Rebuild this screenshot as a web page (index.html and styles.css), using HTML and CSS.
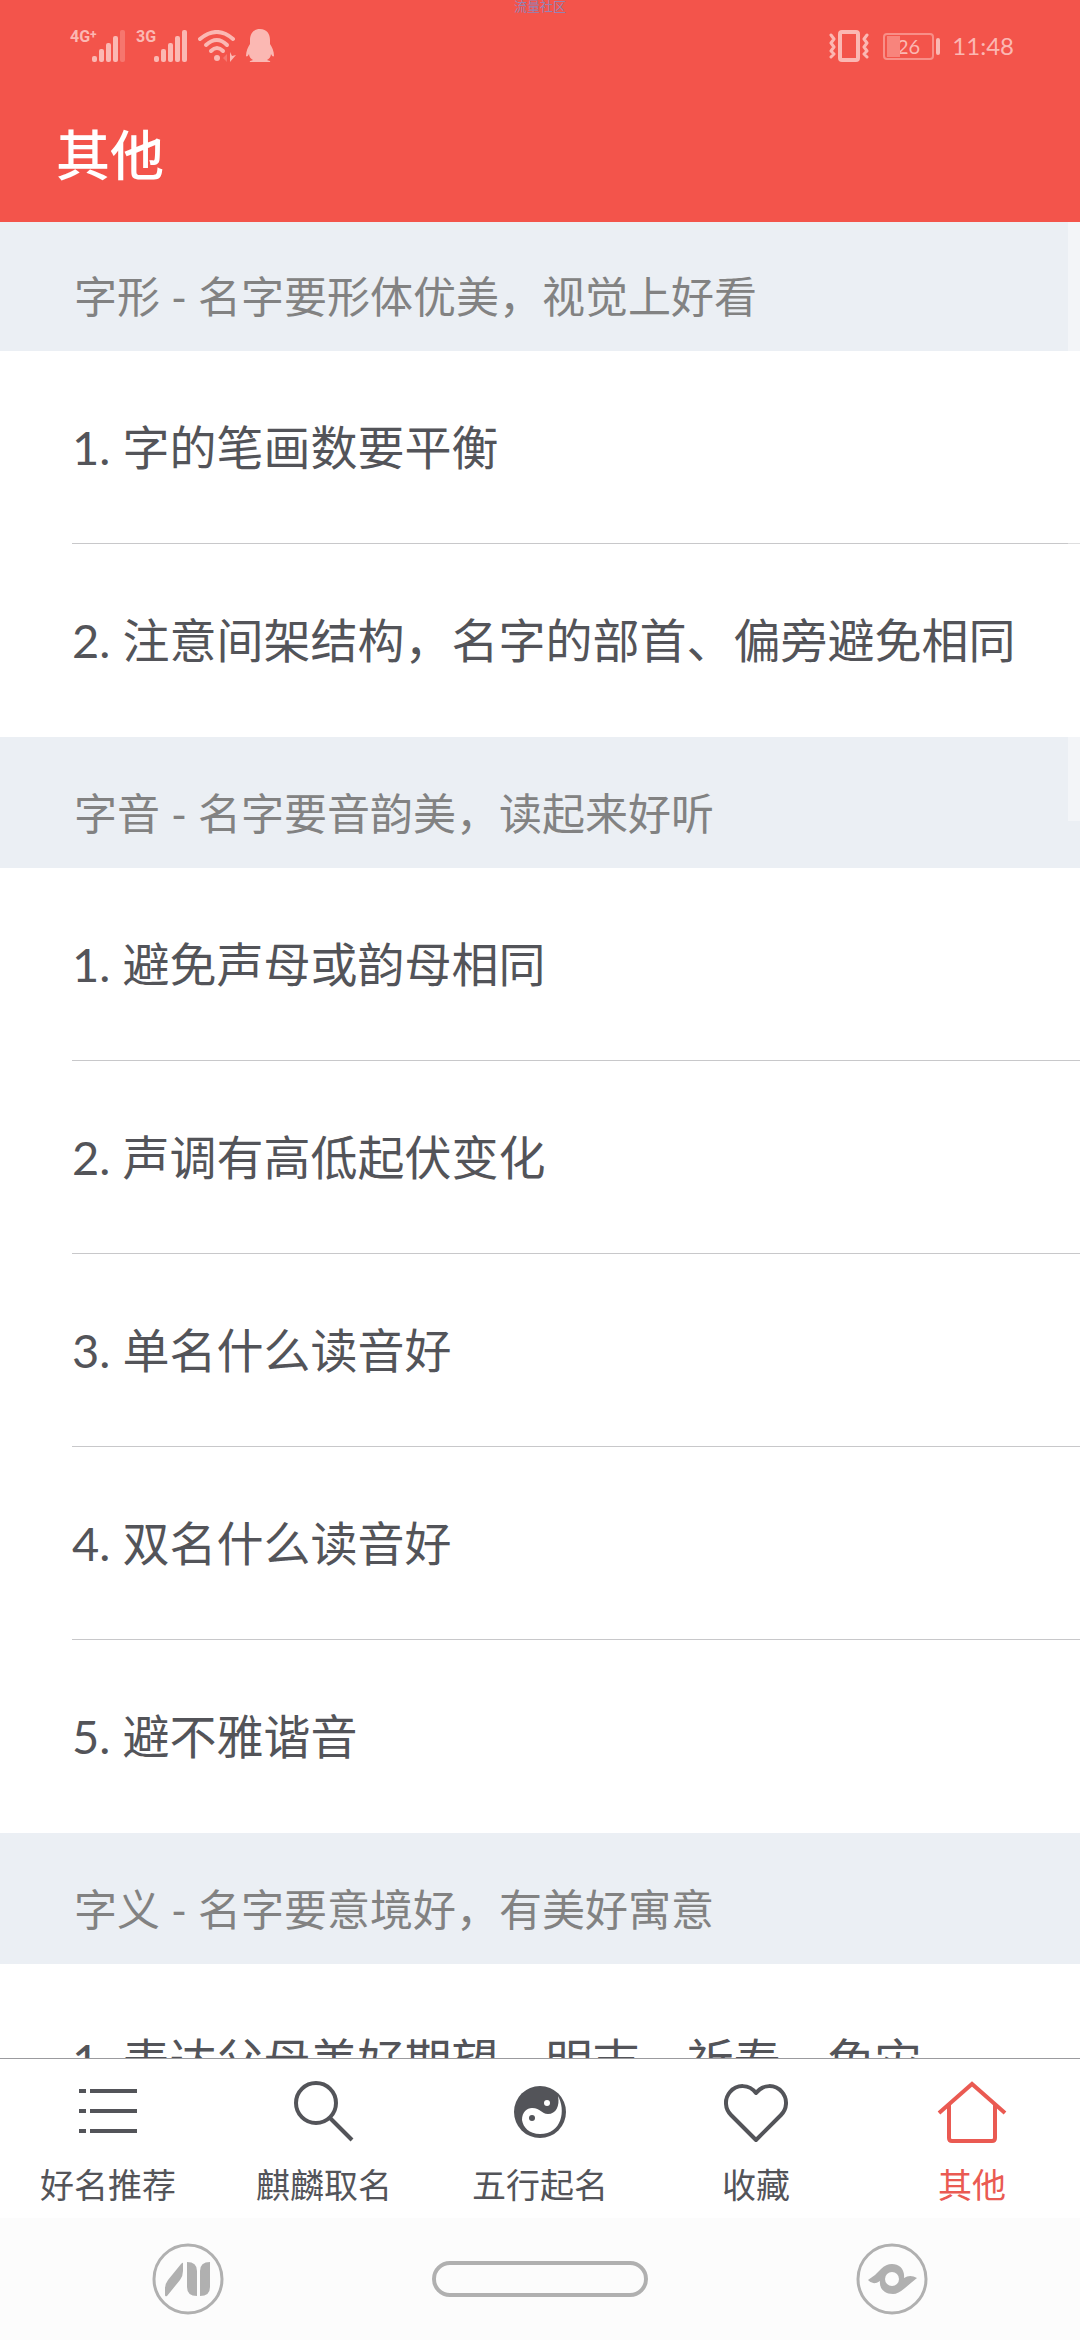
FILE: index.html
```html
<!DOCTYPE html>
<html lang="zh-CN">
<head>
    <meta charset="UTF-8">
    <meta name="viewport" content="width=device-width, initial-scale=1">
    <title>其他</title>
    <link rel="stylesheet" href="styles.css">
</head>
<body>
    <header class="header">
        <span class="netTip">流量社区</span>
        <div class="status">
            <div class="statusLeft">
                <span class="net netPlus">4G<sup>+</sup></span>
                <svg class="signal" width="34" height="32" viewBox="0 0 34 32" fill="currentColor">
                    <rect x="0" y="26" width="5" height="6" rx="2"/>
                    <rect x="7" y="19" width="5" height="13" rx="2"/>
                    <rect x="14" y="13" width="5" height="19" rx="2"/>
                    <rect x="21" y="6" width="5" height="26" rx="2"/>
                    <rect x="28" y="0" width="5" height="32" rx="2" opacity=".35"/>
                </svg>
                <span class="net">3G</span>
                <svg class="signal" width="34" height="32" viewBox="0 0 34 32" fill="currentColor">
                    <rect x="0" y="26" width="5" height="6" rx="2"/>
                    <rect x="7" y="19" width="5" height="13" rx="2"/>
                    <rect x="14" y="13" width="5" height="19" rx="2"/>
                    <rect x="21" y="6" width="5" height="26" rx="2"/>
                    <rect x="28" y="0" width="5" height="32" rx="2"/>
                </svg>
                <svg class="wifi" width="38" height="32" viewBox="0 0 38 32" fill="none" stroke="currentColor" stroke-width="4" stroke-linecap="round">
                    <path d="M2 9 Q19 -5 35 9"/>
                    <path d="M8 15 Q19 5 29 15"/>
                    <path d="M13 21 Q19 15 25 21"/>
                    <circle cx="19" cy="28" r="3" fill="currentColor" stroke="none"/>
                    <path d="M29 24v8l-4-4z" fill="currentColor" stroke="none" opacity=".35"/>
                    <path d="M32 22v10l6-7-4 1z" fill="currentColor" stroke="none"/>
                </svg>
                <svg width="28" height="34" viewBox="0 0 28 34" fill="currentColor">
                    <path d="M14 0C7 0 4 5 4 11v4C2 18 0 22 0 27c1 1 2 0 3-2 0 3 2 5 4 6-2 1-4 1-3 2h20c1-1-1-1-3-2 2-1 4-3 4-6 1 2 2 3 3 2 0-5-2-9-4-12v-4C24 5 21 0 14 0z"/>
                </svg>
            </div>
            <div class="statusRight">
                <svg width="40" height="32" viewBox="0 0 40 32" fill="none" stroke="currentColor" stroke-linecap="round" stroke-linejoin="round">
                    <rect x="11" y="2" width="18" height="28" rx="2" stroke-width="4"/>
                    <path d="M2 5l3 4-3 4 3 4-3 4 3 3-3 3M38 5l-3 4 3 4-3 4 3 4-3 3 3 3" stroke-width="3"/>
                </svg>
                <div class="battery"><span class="batteryLevel"></span>26</div>
                <span class="time">11:48</span>
            </div>
        </div>
        <h1 class="title">其他</h1>
    </header>

    <main class="content">
        <h2 class="groupTitle first">字形 - 名字要形体优美，视觉上好看</h2>
        <ul class="list">
            <li><a href="#">1. 字的笔画数要平衡</a></li>
            <li><a href="#">2. 注意间架结构，名字的部首、偏旁避免相同</a></li>
        </ul>
        <h2 class="groupTitle">字音 - 名字要音韵美，读起来好听</h2>
        <ul class="list">
            <li><a href="#">1. 避免声母或韵母相同</a></li>
            <li><a href="#">2. 声调有高低起伏变化</a></li>
            <li><a href="#">3. 单名什么读音好</a></li>
            <li><a href="#">4. 双名什么读音好</a></li>
            <li><a href="#">5. 避不雅谐音</a></li>
        </ul>
        <h2 class="groupTitle">字义 - 名字要意境好，有美好寓意</h2>
        <ul class="list">
            <li><a href="#">1. 表达父母美好期望，明志、祈寿、免灾</a></li>
        </ul>
        <span class="scrollbar"></span>
    </main>

    <nav class="tabs">
        <a href="#" class="tab">
            <svg width="72" height="72" viewBox="0 0 72 72" fill="currentColor">
                <path d="M7 13h7v4H7zM18 13h47v4H18zM7 33h7v4H7zM18 33h47v4H18zM7 53h7v4H7zM18 53h47v4H18z"/>
            </svg>
            好名推荐
        </a>
        <a href="#" class="tab">
            <svg width="72" height="72" viewBox="0 0 72 72" fill="none" stroke="currentColor" stroke-width="4">
                <circle cx="28" cy="27" r="20"/>
                <path d="M42 42l22 22"/>
            </svg>
            麒麟取名
        </a>
        <a href="#" class="tab">
            <!-- 太极图 -->
            <svg width="72" height="72" viewBox="0 0 72 72">
                <circle cx="36" cy="36" r="26" fill="currentColor"/>
                <path d="M54 20C62 34 58 58 36 58C25 58 19 51 18 44C18 36 23 32 28 32C37 32 37 38 44 38C52 38 56 30 54 20z" fill="#fff"/>
                <circle cx="28" cy="42" r="3" fill="currentColor"/>
                <circle cx="43" cy="27" r="3" fill="#fff"/>
            </svg>
            五行起名
        </a>
        <a href="#" class="tab">
            <svg width="72" height="72" viewBox="0 0 72 72" fill="none" stroke="currentColor" stroke-width="4" stroke-linejoin="round">
                <path d="M36 17C29 8 17 8 10 16C4 23 5 33 11 39L36 64L61 39C67 33 68 23 62 16C55 8 43 8 36 17z"/>
            </svg>
            收藏
        </a>
        <a href="#" class="tab active">
            <svg width="72" height="72" viewBox="0 0 72 72" fill="none" stroke="currentColor" stroke-width="4">
                <path d="M3 37L36 8l33 29"/>
                <path d="M13 29v33q0 3 3 3h40q3 0 3-3V29"/>
            </svg>
            其他
        </a>
    </nav>

    <div class="sysNav">
        <button type="button" aria-label="返回">
            <svg width="72" height="72" viewBox="0 0 72 72">
                <circle cx="36" cy="36" r="34" fill="none" stroke="currentColor" stroke-width="3"/>
                <path fill="currentColor" d="M31 20v8q0 5-3 9L15 53q-2 1-2-1v-7q0-4 3-8l13-16q2-2 2-1zM35 19q10 0 10 9v25q-10 0-10-9zM58 19q-10 0-10 9v25q10 0 10-9z"/>
            </svg>
        </button>
        <button type="button" aria-label="主屏幕"><span class="homeBar"></span></button>
        <button type="button" aria-label="最近任务">
            <svg width="72" height="72" viewBox="0 0 72 72">
                <circle cx="36" cy="36" r="34" fill="none" stroke="currentColor" stroke-width="3"/>
                <path fill="currentColor" d="M12 37Q19 33 25 26Q30 21 36 21C43 21 49 26 48 35Q54 31 61 35Q56 39 49 45Q42 51 37 51C28 51 23 45 24 38Q17 43 12 37z"/>
                <circle cx="36" cy="36" r="7" fill="#fcfcfc"/>
            </svg>
        </button>
    </div>
</body>
</html>
```
FILE: styles.css
```css
* {
    box-sizing: border-box;
    margin: 0;
    padding: 0;
}
body {
    display: flex;
    flex-direction: column;
    height: 100vh;
    overflow: hidden;
    background: #fff;
    color: #535459;
    font-family: Lato, "Noto Sans CJK SC", sans-serif;
}
a {
    color: inherit;
    text-decoration: none;
}
svg {
    display: block;
    flex: none;
}

/* 顶部 */
.header {
    position: relative;
    background: #f3544b;
    color: #fff;
    padding-bottom: 14px;
}
.netTip {
    position: absolute;
    top: 0;
    left: 0;
    right: 0;
    text-align: center;
    font-size: 13px;
    line-height: 12px;
    color: #9483b4;
}
.status {
    display: flex;
    justify-content: space-between;
    align-items: center;
    height: 92px;
    padding: 0 66px 0 70px;
    color: #fbb8b3;
}
.statusLeft,
.statusRight {
    display: flex;
    align-items: center;
}
.net {
    align-self: flex-start;
    width: 18px;
    font-family: Roboto, sans-serif;
    font-size: 16px;
    font-weight: bold;
    line-height: 16px;
}
.netPlus {
    width: 22px;
    white-space: nowrap;
}
.net sup {
    font-size: 12px;
    line-height: 0;
    vertical-align: 3px;
}
.signal {
    margin-right: 10px;
}
.wifi {
    margin-right: 10px;
}
.statusRight {
    gap: 14px;
}
.battery {
    position: relative;
    width: 51px;
    height: 27px;
    border: 2px solid #f88f88;
    border-radius: 4px;
    text-align: center;
    font-size: 20px;
    line-height: 22px;
}
.battery:after {
    content: '';
    position: absolute;
    top: 3px;
    right: -8px;
    width: 4px;
    height: 17px;
    border-radius: 2px;
    background: #fbb8b3;
}
.batteryLevel {
    position: absolute;
    top: 1px;
    left: 2px;
    width: 13px;
    height: 21px;
    background: #f8847c;
}
.time {
    width: 66px;
    text-align: right;
    font-size: 24px;
    line-height: 32px;
}
.title {
    margin-top: 12px;
    padding-left: 56px;
    font-size: 54px;
    font-weight: 500;
    line-height: 104px;
}

/* 列表 */
.content {
    position: relative;
    flex: 1;
    min-height: 0;
    overflow: hidden;
}
.groupTitle {
    padding: 45px 0 22px 74px;
    background: #ebeff4;
    color: #828282;
    font-size: 43px;
    font-weight: 400;
    line-height: 64px;
}
.first {
    padding-top: 43px;
}
.list {
    list-style: none;
}
.list li {
    margin-left: 72px;
    border-bottom: 1px solid #c8c8ca;
    white-space: nowrap;
}
.list li:last-child {
    border-color: transparent;
}
.list a {
    display: block;
    padding: 64px 0;
    font-size: 47px;
    line-height: 64px;
}
.scrollbar {
    position: absolute;
    top: 0;
    right: 0;
    width: 12px;
    height: 599px;
    background: rgba(255, 255, 255, .4);
}

/* 底部标签 */
.tabs {
    display: flex;
    border-top: 1px solid #9b9b9e;
    background: #fff;
}
.tab {
    flex: 1;
    display: flex;
    flex-direction: column;
    align-items: center;
    gap: 16px;
    padding: 17px 0 12px;
    font-size: 34px;
    line-height: 42px;
}
.active {
    color: #ea5a52;
}

.sysNav {
    display: flex;
    padding: 0 12px;
    background: #fcfcfc;
}
.sysNav button {
    flex: 1;
    display: flex;
    justify-content: center;
    align-items: center;
    height: 122px;
    border: none;
    background: none;
    color: #b0b0b0;
}
.homeBar {
    width: 216px;
    height: 36px;
    border: 4px solid #b0b0b0;
    border-radius: 18px;
}
```
